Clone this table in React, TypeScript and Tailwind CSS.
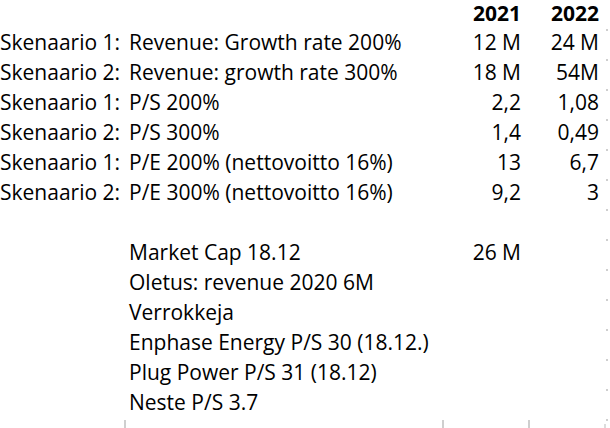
import React from "react";

type Row = [string, string, string, string];

const rows: Row[] = [
  ["Skenaario 1:", "Revenue: Growth rate 200%", "12 M", "24 M"],
  ["Skenaario 2:", "Revenue: growth rate 300%", "18 M", "54M"],
  ["Skenaario 1:", "P/S 200%", "2,2", "1,08"],
  ["Skenaario 2:", "P/S 300%", "1,4", "0,49"],
  ["Skenaario 1:", "P/E 200% (nettovoitto 16%)", "13", "6,7"],
  ["Skenaario 2:", "P/E 300% (nettovoitto 16%)", "9,2", "3"],
  ["", "", "", ""],
  ["", "Market Cap 18.12", "26 M", ""],
  ["", "Oletus: revenue 2020 6M", "", ""],
  ["", "Verrokkeja", "", ""],
  ["", "Enphase Energy P/S 30 (18.12.)", "", ""],
  ["", "Plug Power P/S 31 (18.12)", "", ""],
  ["", "Neste P/S 3.7", "", ""],
];

function Dot() {
  return <div className="mt-[2px] w-[2px] h-[2px] bg-[#cfcfcf]" />;
}

function Tick({ light }: { light?: boolean }) {
  return <div className={`mt-[3px] w-[2px] h-[8px] ${light ? "bg-[#dcdcdc]" : "bg-[#cfcfcf]"}`} />;
}

export default function App() {
  return (
    <div
      className="w-[610px] h-[428px] overflow-hidden bg-white text-black"
      style={{ fontFamily: '"Open Sans", "Noto Sans", sans-serif' }}
    >
      <div className="grid grid-cols-[125px_318px_86px_77px_2px] text-[21px] leading-[30px]">
        {/* header */}
        <div className="h-[27px]" />
        <div className="h-[27px]" />
        <div className="h-[27px] leading-[27px] font-bold text-right pr-[8px]">2021</div>
        <div className="h-[27px] leading-[27px] font-bold text-right pr-[7px]">2022</div>
        <div className="h-[27px]" />
        {rows.map((r, i) => (
          <React.Fragment key={i}>
            <div className="h-[30px] whitespace-nowrap">{r[0]}</div>
            <div className="h-[30px] whitespace-nowrap pl-[4px]">{r[1]}</div>
            <div className="h-[30px] whitespace-nowrap text-right pr-[8px]">{r[2]}</div>
            <div className="h-[30px] whitespace-nowrap text-right pr-[7px]">{r[3]}</div>
            <div className="h-[30px]">
              <Dot />
            </div>
          </React.Fragment>
        ))}
        {/* partial last row with gridline stubs */}
        <div className="h-[11px]" />
        <div className="h-[11px] ml-[-1px]">
          <Tick />
        </div>
        <div className="h-[11px] ml-[-1px]">
          <Tick />
        </div>
        <div className="h-[11px] ml-[-1px] flex justify-between">
          <Tick />
          <div className="mt-[4px]">
            <Tick light />
          </div>
        </div>
        <div className="h-[11px]">
          <Dot />
        </div>
      </div>
    </div>
  );
}
